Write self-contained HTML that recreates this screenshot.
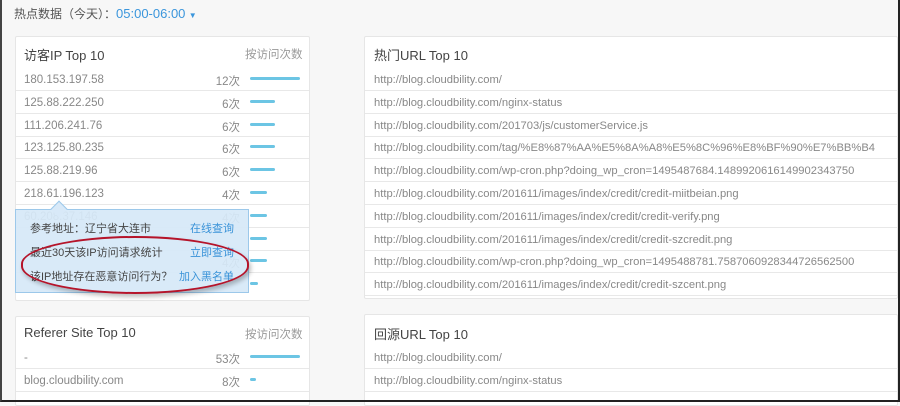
<!DOCTYPE html>
<html><head><meta charset="utf-8"><style>
*{margin:0;padding:0;box-sizing:border-box}
body{width:900px;height:402px;overflow:hidden;background:#f7f7f7;font-family:"Liberation Sans","Noto Sans CJK SC",sans-serif;position:relative}
.frame{position:absolute;left:0;top:0;width:900px;height:402px;border:2px solid #222;border-top:none;border-left:2px solid #444;pointer-events:none;z-index:20}
.t{position:absolute;white-space:nowrap}
.card{position:absolute;background:#fff;border:1px solid #e6e6e6;border-radius:2px}
.h{font-size:13px;color:#444}
.r{font-size:11.5px;color:#888}
.u{font-size:11.2px;color:#888}
.line{position:absolute;height:1px;background:#e8e8e8}
.bar{position:absolute;height:3px;background:#6cc5e4;border-radius:2px}
.b{color:#3a93d8}
</style></head><body>
<div class="frame"></div>
<div class="t" style="left:14px;top:5px;font-size:12px;color:#555">热点数据（今天）：<span style="color:#3b96dc;font-size:13px">05:00-06:00</span> <span style="color:#3b96dc;font-size:8px">▼</span></div>

<div class="card" style="left:15px;top:36px;width:295px;height:265px"></div>
<div class="card" style="left:364px;top:36px;width:534px;height:263px"></div>
<div class="card" style="left:15px;top:316px;width:295px;height:90px"></div>
<div class="card" style="left:364px;top:314px;width:534px;height:92px"></div>

<div class="t h" style="left:24px;top:45px">访客IP Top 10</div>
<div class="t r" style="left:245px;top:46px;color:#999">按访问次数</div>
<div class="t h" style="left:374px;top:45px">热门URL Top 10</div>
<div class="t h" style="left:24px;top:325px">Referer Site Top 10</div>
<div class="t r" style="left:245px;top:326px;color:#999">按访问次数</div>
<div class="t h" style="left:374px;top:324px">回源URL Top 10</div>
<div id="ipl"></div>

<script>
var ips=[["180.153.197.58","12次",50],["125.88.222.250","6次",25],["111.206.241.76","6次",25],["123.125.80.235","6次",25],["125.88.219.96","6次",25],["218.61.196.123","4次",17],["60.208.37.146","4次",17],["","",17],["","4次",17],["","",8]];
var urls=["http://blog.cloudbility.com/","http://blog.cloudbility.com/nginx-status","http://blog.cloudbility.com/201703/js/customerService.js","http://blog.cloudbility.com/tag/%E8%87%AA%E5%8A%A8%E5%8C%96%E8%BF%90%E7%BB%B4","http://blog.cloudbility.com/wp-cron.php?doing_wp_cron=1495487684.1489920616149902343750","http://blog.cloudbility.com/201611/images/index/credit/credit-miitbeian.png","http://blog.cloudbility.com/201611/images/index/credit/credit-verify.png","http://blog.cloudbility.com/201611/images/index/credit/credit-szcredit.png","http://blog.cloudbility.com/wp-cron.php?doing_wp_cron=1495488781.7587060928344726562500","http://blog.cloudbility.com/201611/images/index/credit/credit-szcent.png"];
var h="";
for(var i=0;i<10;i++){var y=72+i*22.8;
 if(i<9)h+='<div class="line" style="left:16px;width:293px;top:'+(y+18)+'px"></div><div class="line" style="left:365px;width:532px;top:'+(y+18)+'px"></div>';
 h+='<div class="t r" style="left:24px;top:'+(y+2)+'px">'+ips[i][0]+'</div><div class="t r" style="left:200px;width:40px;text-align:right;top:'+(y+1)+'px">'+ips[i][1]+'</div><div class="bar" style="left:250px;width:'+ips[i][2]+'px;top:'+(y+5)+'px"></div>';
 h+='<div class="t u" style="left:374px;top:'+(y+2)+'px">'+urls[i]+'</div>';}
h+='<div class="line" style="left:365px;width:532px;top:'+(72+9*22.8+18)+'px"></div>';
var rr=[["-","53次",50],["blog.cloudbility.com","8次",6]];
for(var i=0;i<2;i++){var y=350+i*23;
 h+='<div class="line" style="left:16px;width:293px;top:'+(y+18)+'px"></div><div class="line" style="left:365px;width:532px;top:'+(y+18)+'px"></div>';
 h+='<div class="t r" style="left:24px;top:'+(y+2)+'px">'+rr[i][0]+'</div><div class="t r" style="left:200px;width:40px;text-align:right;top:'+(y+1)+'px">'+rr[i][1]+'</div><div class="bar" style="left:250px;width:'+rr[i][2]+'px;top:'+(y+5)+'px"></div>';
 h+='<div class="t u" style="left:374px;top:'+(y+2)+'px">'+urls[i]+'</div>';}
document.getElementById("ipl").innerHTML=h;
</script>

<div style="position:absolute;left:15px;top:209px;width:234px;height:84px;background:rgba(214,232,248,0.93);border:1px solid #9cc8ea;z-index:5"></div>
<div style="position:absolute;left:53px;top:203px;width:12px;height:12px;background:#d8e9f8;border-left:1px solid #9cc8ea;border-top:1px solid #9cc8ea;transform:rotate(45deg);z-index:6"></div>
<div class="t" style="left:30px;top:220px;font-size:11px;color:#444;z-index:7">参考地址：辽宁省大连市</div>
<div class="t b" style="left:190px;top:220px;font-size:11px;z-index:7">在线查询</div>
<div class="t" style="left:30px;top:244px;font-size:11px;color:#444;z-index:7">最近30天该IP访问请求统计</div>
<div class="t b" style="left:190px;top:244px;font-size:11px;z-index:7">立即查询</div>
<div class="t" style="left:30px;top:268px;font-size:11px;color:#444;z-index:7">该IP地址存在恶意访问行为？</div>
<div class="t b" style="left:179px;top:268px;font-size:11px;z-index:7">加入黑名单</div>
<div style="position:absolute;left:21px;top:236px;width:228px;height:58px;border:2px solid #b5142a;border-radius:50%/48%;box-shadow:2px 3px 4px rgba(0,0,0,0.25);z-index:8"></div>
</body></html>
